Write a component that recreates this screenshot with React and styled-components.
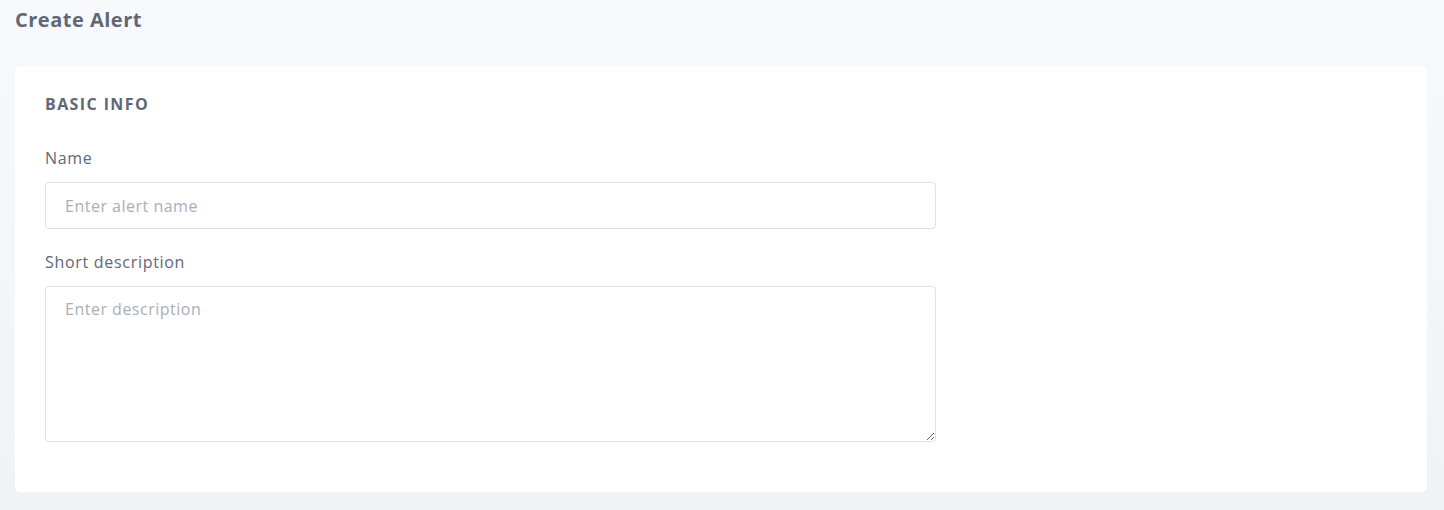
import React from "react";
import styled, { createGlobalStyle } from "styled-components";

const GlobalStyle = createGlobalStyle`
  html, body {
    margin: 0;
    padding: 0;
  }
  body {
    font-family: "Open Sans", Lato, sans-serif;
    background: linear-gradient(180deg, #f8f9fd 0%, #f1f2f6 100%);
    min-height: 510px;
  }
`;

const Page = styled.div`
  padding: 7px 17px 18px 15px;
`;

const Title = styled.h1`
  margin: 0 0 33px 0;
  font-size: 20px;
  line-height: 26px;
  font-weight: 700;
  letter-spacing: 0.5px;
  color: #5f6874;
`;

const Card = styled.div`
  background: #fff;
  border-radius: 5px;
  padding: 28px 30px 50px 30px;
  height: 426px;
  box-sizing: border-box;
`;

const SectionTitle = styled.h2`
  margin: 0 0 34px 0;
  font-size: 16px;
  line-height: 20px;
  font-weight: 700;
  letter-spacing: 1.4px;
  color: #5f6874;
`;

const Form = styled.div`
  width: 891px;
  display: flex;
  flex-direction: column;
`;

const Label = styled.label`
  display: block;
  font-size: 16px;
  line-height: 20px;
  letter-spacing: 0.7px;
  color: #5f6874;
  margin-bottom: 14px;
`;

const Field = styled.div`
  margin-bottom: ${(p) => p.gap || 0}px;
`;

const inputBase = `
  width: 100%;
  box-sizing: border-box;
  border: 1px solid #dfe1e6;
  border-radius: 4px;
  font-family: "Open Sans", Lato, sans-serif;
  font-size: 16px;
  letter-spacing: 0.5px;
  color: #4a5260;
  padding: 0 19px;
  outline: none;
  background: #fff;
  &::placeholder {
    color: #a9afb8;
  }
`;

const Input = styled.input`
  ${inputBase}
  height: 47px;
`;

const TextArea = styled.textarea`
  ${inputBase}
  display: block;
  height: 156px;
  padding-top: 11px;
  line-height: 22px;
  resize: vertical;
`;

export default function App() {
  return (
    <>
      <GlobalStyle />
      <Page>
        <Title>Create Alert</Title>
        <Card>
          <SectionTitle>BASIC INFO</SectionTitle>
          <Form>
            <Field gap={23}>
              <Label>Name</Label>
              <Input placeholder="Enter alert name" />
            </Field>
            <Field>
              <Label>Short description</Label>
              <TextArea placeholder="Enter description" />
            </Field>
          </Form>
        </Card>
      </Page>
    </>
  );
}
